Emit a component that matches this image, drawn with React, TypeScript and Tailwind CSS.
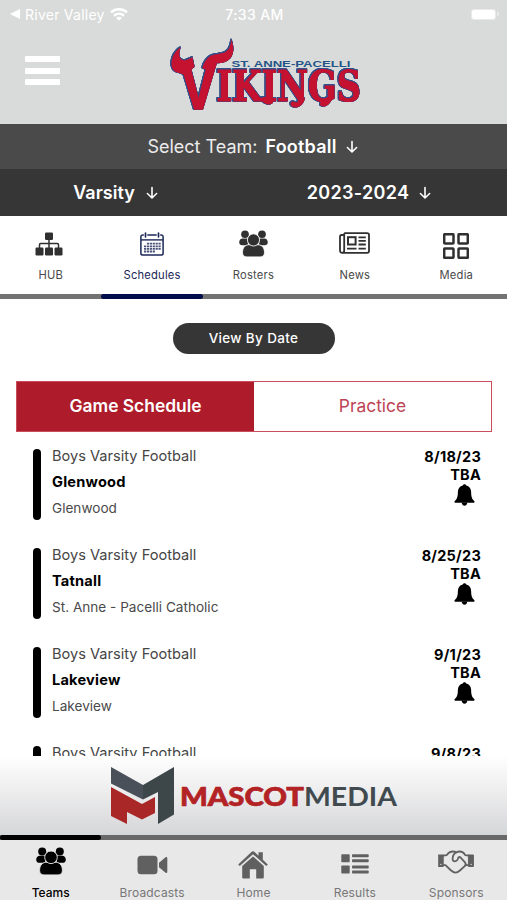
import React from 'react';

interface Game {
  opponent: string;
  location: string;
  date: string;
}

const games: Game[] = [
  { opponent: 'Glenwood', location: 'Glenwood', date: '8/18/23' },
  { opponent: 'Tatnall', location: 'St. Anne - Pacelli Catholic', date: '8/25/23' },
  { opponent: 'Lakeview', location: 'Lakeview', date: '9/1/23' },
  { opponent: 'Brookstone', location: 'Brookstone', date: '9/8/23' },
];

function SitemapIcon() {
  return (
    <svg viewBox="0 0 28 24" fill="currentColor" className="mr-[3px] h-[24px] w-[28px]">
      <rect x="10" y=".5" width="8" height="7.5" rx="1.2" />
      <rect x=".5" y="15.500" width="8" height="8" rx="1.2" />
      <rect x="10" y="15.500" width="8" height="8" rx="1.2" />
      <rect x="19.500" y="15.500" width="8" height="8" rx="1.2" />
      <path d="M14 7v9M4.500 16v-3.300c0-.7.400-1.100 1.100-1.100h16.800c.7 0 1.100.4 1.100 1.100V16" fill="none" stroke="currentColor" strokeWidth="1.500" />
    </svg>
  );
}

function PeopleIcon({ className }: { className?: string }) {
  return (
    <svg viewBox="0 0 30 28" fill="currentColor" className={className}>
      <g stroke="none">
        <circle cx="6.200" cy="4.400" r="4" />
        <circle cx="23.800" cy="4.400" r="4" />
        <path d="M3.200 8.800h6v7H3.500C1.300 15.800.2 14.600.2 12.700c0-2 1-3.300 3-3.900zM26.800 8.800h-6v7h5.700c2.200 0 3.300-1.200 3.300-3.100 0-2-1-3.300-3-3.900z" />
      </g>
      <g strokeWidth=".9">
        <path d="M9.500 15.300h11c4 .6 5.900 3.900 5.900 8.100 0 2.800-1.600 4.500-4.400 4.500H8c-2.800 0-4.400-1.700-4.400-4.500 0-4.200 1.900-7.500 5.900-8.100z" />
        <circle cx="15" cy="10.300" r="6.300" />
      </g>
    </svg>
  );
}

function CalendarIcon() {
  const rows = [11.700, 14.300, 16.900, 19.500];
  return (
    <svg viewBox="0 0 24 24" fill="none" stroke="currentColor" className="h-[24px] w-[24px]">
      <path d="M3.800 3H2.800C1.600 3 .9 3.700.9 4.900v16.300c0 1.200.7 1.900 1.900 1.900h18.400c1.200 0 1.900-.7 1.900-1.900V4.900c0-1.200-.7-1.900-1.900-1.900h-1M7.300 3h9.400" strokeWidth="1.500" />
      <path d="M1 7.900h22" strokeWidth="1.400" />
      <path d="M5.500 1.200v3.600M18.500 1.200v3.600" strokeWidth="1.700" strokeLinecap="round" />
      {rows.map((y, i) => (
        <path key={y} d={i === 0 ? `M6.900 ${y}H21` : i === 3 ? `M4 ${y}h11` : `M4 ${y}h17`} strokeWidth="1.800" strokeDasharray="2.200 .7" opacity=".8" />
      ))}
    </svg>
  );
}

function NewsIcon() {
  return (
    <svg viewBox="0 0 31 22" fill="none" stroke="currentColor" strokeWidth="1.800" className="mb-px h-[22px] w-[31px]">
      <path d="M5.200 1.200h23c1.200 0 1.800.6 1.800 1.800v16c0 1.200-.6 1.800-1.800 1.800H3.200C1.800 20.800 1 20 1 18.600V4.400c0-.9.500-1.400 1.400-1.400h2.800M5.200 1.200v17.300c0 1.400-.8 2.300-2 2.300" strokeLinejoin="round" />
      <rect x="9" y="5.200" width="7.600" height="7.300" strokeWidth="2" />
      <path d="M19.500 5.300h7.300M19.500 8.900h7.300M19.500 12.500h7.300M8 16.600h9.500M19.500 16.600h7.300" />
    </svg>
  );
}

function GridIcon() {
  return (
    <svg viewBox="0 0 26 26" fill="none" stroke="currentColor" strokeWidth="2.500" className="mt-[4px] h-[26px] w-[26px]">
      <rect x="1.200" y="1.200" width="9.300" height="9.300" rx=".7" />
      <rect x="15.500" y="1.200" width="9.300" height="9.300" rx=".7" />
      <rect x="1.200" y="15.500" width="9.300" height="9.300" rx=".7" />
      <rect x="15.500" y="15.500" width="9.300" height="9.300" rx=".7" />
    </svg>
  );
}

function BellIcon() {
  return (
    <svg viewBox="0 0 21 22" fill="currentColor" className="mr-[6px] h-[22px] w-[21px]">
      <path d="M10.500.2c1 0 1.600.6 1.700 1.400 3.100.7 4.800 2.900 4.900 6.200.1 4.300.5 7 2.600 8.600.7.500.9.900.9 1.400 0 .6-.3.900-.9.900H1.300c-.6 0-.9-.3-.9-.9 0-.5.200-.9.900-1.400 2.100-1.600 2.500-4.300 2.600-8.600.1-3.300 1.800-5.500 4.900-6.200C8.900.8 9.500.2 10.500.2z" />
      <path d="M7.700 18.500h5.600c0 2-1.200 3.200-2.800 3.200s-2.800-1.200-2.800-3.200z" />
    </svg>
  );
}

function VideoIcon() {
  return (
    <svg viewBox="0 0 31 20" fill="currentColor" className="mt-[2px] h-[20px] w-[31px]">
      <rect x=".5" y=".8" width="20" height="18.400" rx="3.500" />
      <path d="M22 7.700l6.300-5.300c1-.8 2-.4 2 .8v13.600c0 1.200-1 1.600-2 .8L22 12.300z" />
    </svg>
  );
}

function HomeIcon() {
  return (
    <svg viewBox="0 0 30 28" fill="currentColor" className="mt-[2px] h-[28px] w-[30px]">
      <path d="M15 5.400L4.200 15.100v11.100c0 .9.500 1.400 1.400 1.400h6.200v-9.400h6.400v9.400h6.200c.9 0 1.400-.5 1.400-1.400V15.100z" />
      <path d="M13.700.8c.8-.7 1.800-.7 2.600 0l4.200 3.900V1.200h4.300v7.500l5 4.700-1.500 1.700L15 3.200 1.700 15.100.2 13.400z" />
    </svg>
  );
}

function ResultsIcon() {
  return (
    <svg viewBox="0 0 28 20" fill="currentColor" className="h-[20px] w-[28px]">
      <rect x=".3" y=".3" width="8.400" height="8" rx=".8" />
      <rect x=".3" y="11.500" width="8.400" height="8" rx=".8" />
      <rect x="11" y=".3" width="16.700" height="3" rx=".8" />
      <rect x="11" y="5.300" width="16.700" height="3" rx=".8" />
      <rect x="11" y="11.500" width="16.700" height="3" rx=".8" />
      <rect x="11" y="16.500" width="16.700" height="3" rx=".8" />
    </svg>
  );
}

function HandshakeIcon() {
  return (
    <svg viewBox="0 0 36 24" fill="none" stroke="currentColor" strokeWidth="1.800" strokeLinejoin="round" strokeLinecap="round" className="mb-[3px] h-[24px] w-[36px]">
      <path d="M.6 5h4.600v11.500H.6zM30.800 5h4.600v11.500h-4.600z" fill="currentColor" strokeWidth="1" />
      <path d="M2.800 14.300h.1M33.100 14.300h.1" stroke="#e8e8e8" strokeWidth="1.300" />
      <path d="M5.500 5.500l3.300-.4C10.600 2.300 12.200 1.500 15 1.500c1.400 0 2.300.3 3.200.9 1-.6 2-.9 3.400-.9 2.800 0 4.200 1 5.600 3.600l3.400.4" />
      <path d="M5.500 15.200h2l5 4.800c1.800 1.600 3.300 2.600 5 2.600 1.400 0 2.800-.7 4.400-2.100l5.900-5.300h2.900" />
      <path d="M18.200 2.400c-2 1-3.400 3.300-3.600 6.200-.1 1.700.8 2.700 2.200 2.700 1.700 0 3-1.500 3.600-3.900l1.700-.4 4.700 5.200c1 1.200 1.100 2 .5 3" />
    </svg>
  );
}

function DownArrow() {
  return (
    <svg viewBox="0 0 12 14" fill="none" stroke="currentColor" strokeWidth="1.600" strokeLinecap="round" strokeLinejoin="round" className="h-[14px] w-[12px]">
      <path d="M6 1.500v10M1.400 7.500L6 12l4.600-4.500" />
    </svg>
  );
}

function VikingsLogo() {
  return (
    <svg viewBox="0 0 194 74" className="h-[74px] w-[194px] overflow-visible">
      <g fill="#c41230" className="[filter:drop-shadow(0.5px_0_0_#33508a)_drop-shadow(-0.5px_0_0_#33508a)_drop-shadow(0_0.5px_0_#33508a)_drop-shadow(0_-0.5px_0_#33508a)]">
        <text x="47.500" y="63" textLength="144.500" lengthAdjust="spacingAndGlyphs" fontSize="42.500" fontWeight="700" fontFamily="'DejaVu Serif', serif" stroke="#c41230" strokeWidth="1.100">IKINGS</text>
        <text x="11" y="70.500" textLength="37" lengthAdjust="spacingAndGlyphs" fontSize="68" fontWeight="700" fontFamily="'Liberation Sans', sans-serif" stroke="#c41230" strokeWidth="1.500">V</text>
        {/* horns */}
        <path d="M11.700 9.300C5 14 2.500 20 2.500 26c0 5 3 8.500 8 9l5 2 10-8-2-9.700-7 3c-3 .3-5.500-1.300-6-4-.4-3 .4-6 1.200-9z" />
        <path d="M62.300 1.300c-.5 7-2.500 11.500-7.500 13.500-4.500 1.600-9.500 1-13.500 3.200-4 2.500-6.500 7-8 12l8 4 5.500-9c7 .8 12.500-1.500 15.500-6 3.200-5 2.300-11.500 0-17.700z" />
        {/* letter tails */}
        <path d="M91 60c2 4 6 7 10 6.500 2-.3 3.500-2 3.200-4l-6-4zM136 60c-1 5-4 9-9 9.500-3 .2-5.500-1.200-5.500-3.500 0-1.600 1-2.600 2.500-2.600 2 0 3 1.500 4.500.6l1.500-4zM163 60c-.5 4-4 8-8 8.500-2.500.3-4-.8-4-2.500s1.500-2.500 3-2.400c1.600.1 2-1.600 2-3.600z" />
      </g>
      <text x="62.500" y="29" textLength="119" lengthAdjust="spacingAndGlyphs" fontSize="9.500" fontWeight="700" fontFamily="'Liberation Sans', sans-serif" fill="#245486">ST. ANNE-PACELLI</text>
    </svg>
  );
}

function SponsorBanner() {
  return (
    <div className="relative z-10 flex h-[79px] shrink-0 items-center justify-center bg-gradient-to-b from-white via-[#ebebec] to-[#d5d6d8]">
      <svg viewBox="0 0 290 62" className="h-[62px] w-[290px] overflow-visible">
        <path d="M2 2l32 18v14.500L2 18.500z" fill="#4a5059" />
        <path d="M34 20L65 2v47.500L49 59V27l-15 7.500z" fill="#3d4648" />
        <path d="M2 22l31 17 13-7v16l-13 6.500L18 47v12L2 51z" fill="#a92827" />
        <g fontFamily="Lato, sans-serif" fontSize="27">
          <text x="71" y="40.500" textLength="124" lengthAdjust="spacingAndGlyphs" fontWeight="900" fill="#b32224" stroke="#b32224" strokeWidth=".7">MASCOT</text>
          <text x="195" y="40.500" textLength="93" lengthAdjust="spacingAndGlyphs" fontWeight="700" fill="#414b4f">MEDIA</text>
        </g>
      </svg>
    </div>
  );
}

const tabs = [
  { label: 'HUB', icon: <SitemapIcon /> },
  { label: 'Schedules', icon: <CalendarIcon />, active: true },
  { label: 'Rosters', icon: <PeopleIcon className="h-[27px] w-[29px] stroke-white" /> },
  { label: 'News', icon: <NewsIcon /> },
  { label: 'Media', icon: <GridIcon /> },
];

const navItems = [
  { label: 'Teams', icon: <PeopleIcon className="mb-[5px] h-[28px] w-[30px] stroke-[#e8e8e8]" />, active: true },
  { label: 'Broadcasts', icon: <VideoIcon /> },
  { label: 'Home', icon: <HomeIcon /> },
  { label: 'Results', icon: <ResultsIcon /> },
  { label: 'Sponsors', icon: <HandshakeIcon /> },
];

function GameRow({ game }: { game: Game }) {
  return (
    <div className="flex h-[99px] items-start pl-[33px] pr-[26px]">
      <div className="h-[71px] w-[8px] shrink-0 rounded-full bg-black" />
      <div className="ml-[11px] flex-1">
        <div className="mt-[-3px] text-[14.600px] leading-5 text-[#454545]">Boys Varsity Football</div>
        <div className="mt-[6px] text-[14.600px] font-bold leading-5 tracking-[0.2px] text-black">{game.opponent}</div>
        <div className="mt-[6px] text-[13.600px] leading-5 text-[#4a4a4a]">{game.location}</div>
      </div>
      <div className="mt-[-1px] flex flex-col items-end text-[14.500px] font-bold leading-[18px] text-black">
        <span className="tracking-[0.25px]">{game.date}</span>
        <span className="tracking-[0.25px]">TBA</span>
        <BellIcon />
      </div>
    </div>
  );
}

export default function App() {
  return (
    <div className="flex h-[900px] w-[507px] flex-col overflow-hidden bg-white font-['Inter',sans-serif]">
      <header className="h-[124px] shrink-0 bg-[#d9dbda] text-white">
        <div className="grid h-[28px] grid-cols-3 items-center pl-[10px] pr-[8px] text-[14px]">
          <div className="flex items-center">
            <svg viewBox="0 0 10 10" fill="currentColor" className="mr-[5px] h-[10px] w-[10px]">
              <path d="M0 5l10-5v10z" />
            </svg>
            <span className="tracking-[0.25px]">River Valley</span>
            <svg viewBox="0 0 18 14" fill="none" stroke="currentColor" strokeWidth="2.500" className="ml-[5px] h-[14px] w-[18px]">
              <path d="M1 5.300c4.600-4.200 11.400-4.200 16 0M4 8.700c3-2.700 7-2.700 10 0" />
              <path d="M9 13.800l-2.800-2.900c1.600-1.400 4-1.400 5.600 0z" fill="currentColor" stroke="none" />
            </svg>
          </div>
          <span className="text-center font-medium tracking-[0.4px]">7:33 AM</span>
          <div className="flex items-center justify-end">
            <div className="h-[11px] w-[25px] rounded-[3px] border border-[#e8e9e9] bg-white" />
            <div className="ml-px h-[4px] w-[2px] rounded-r bg-[#ececec]" />
          </div>
        </div>
        <div className="flex items-start pl-[25px]">
          <div className="mt-[28px] flex w-[35px] flex-col gap-[5.500px]">
            <div className="h-[6px] rounded-[1px] bg-white" />
            <div className="h-[6px] rounded-[1px] bg-white" />
            <div className="h-[6px] rounded-[1px] bg-white" />
          </div>
          <div className="ml-[109px] mt-[10px]">
            <VikingsLogo />
          </div>
        </div>
      </header>

      <div className="flex h-[45px] shrink-0 items-center justify-center bg-[#4a4a4a] pr-[2px] text-[18px] text-white">
        <span className="text-[#ececec]">Select Team:</span>
        <span className="ml-2 mr-[9px] font-semibold tracking-[0.2px]">Football</span>
        <DownArrow />
      </div>
      <div className="flex h-[47px] shrink-0 items-center bg-[#363636] text-[18px] font-semibold text-white">
        <div className="flex w-[231px] items-center justify-center gap-[11px]">
          Varsity <DownArrow />
        </div>
        <div className="flex w-[276px] items-center justify-center gap-[10px] tracking-[0.300px]">
          2023-2024 <DownArrow />
        </div>
      </div>

      <nav className="grid h-[83px] shrink-0 grid-cols-5">
        {tabs.map((tab) => (
          <div key={tab.label} className={tab.active ? 'flex flex-col items-center text-[#1c2858]' : 'flex flex-col items-center text-[#303030]'}>
            <div className="flex h-[54px] items-center justify-center pt-px">{tab.icon}</div>
            <span className={tab.active ? 'h-[24px] text-[11.200px] leading-none tracking-[0.2px]' : 'h-[24px] text-[11.200px] leading-none tracking-[0.2px] text-[#4a4a4a]'}>{tab.label}</span>
            <div className="h-[5px] w-full bg-[#737373]">
              {tab.active && <div className="h-full rounded-full bg-[#000d49]" />}
            </div>
          </div>
        ))}
      </nav>

      <main className="min-h-0 flex-1 overflow-hidden">
        <button className="mx-auto mt-[24px] block h-[31px] w-[162px] rounded-full bg-[#363636] text-[13.500px] font-medium tracking-[0.350px] text-white">
          View By Date
        </button>
        <div className="ml-[16px] mr-[15px] mt-[27px] flex h-[51px] border border-[#c94d5b] text-[17.400px]">
          <button className="w-1/2 bg-[#ae1c2b] font-semibold text-white">Game Schedule</button>
          <button className="w-1/2 text-[#bd4456]">Practice</button>
        </div>
        <div className="mt-[17px]">
          {games.map((game) => (
            <GameRow key={game.date} game={game} />
          ))}
        </div>
      </main>

      <SponsorBanner />
      <nav className="grid h-[65px] shrink-0 grid-cols-5 bg-[#e8e8e8]">
        {navItems.map((item) => (
          <div key={item.label} className={item.active ? 'flex flex-col items-center text-black' : 'flex flex-col items-center text-[#606060]'}>
            <div className="h-[5px] w-full bg-[#696969]">
              {item.active && <div className="h-full rounded-full bg-black" />}
            </div>
            <div className="flex h-[47px] items-center justify-center">{item.icon}</div>
            <span className={item.active ? 'text-[12px] font-medium leading-none' : 'text-[12px] leading-none tracking-[0.150px] text-[#777]'}>{item.label}</span>
          </div>
        ))}
      </nav>
    </div>
  );
}
